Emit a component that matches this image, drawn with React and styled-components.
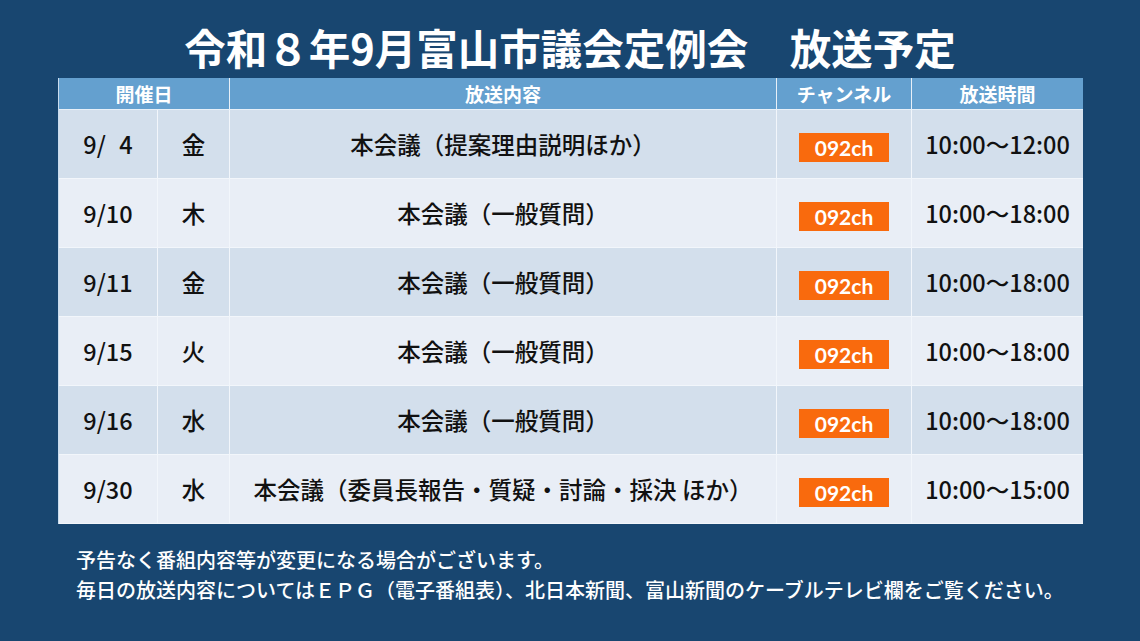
import styled, { createGlobalStyle } from "styled-components";

const GlobalStyle = createGlobalStyle`
    body {
        margin: 0;
        background: #184670;
        font-family: "Noto Sans CJK JP", "Noto Sans", sans-serif;
    }
`

const rows = [
    { date: "9/\u20074", day: "金", content: "本会議（提案理由説明ほか）", time: "10:00～12:00" },
    { date: "9/10", day: "木", content: "本会議（一般質問）", time: "10:00～18:00" },
    { date: "9/11", day: "金", content: "本会議（一般質問）", time: "10:00～18:00" },
    { date: "9/15", day: "火", content: "本会議（一般質問）", time: "10:00～18:00" },
    { date: "9/16", day: "水", content: "本会議（一般質問）", time: "10:00～18:00" },
    { date: "9/30", day: "水", content: "本会議（委員長報告・質疑・討論・採決 ほか）", time: "10:00～15:00" },
]

export default function App() {
    return (
        <Page>
            <GlobalStyle />
            <Title>令和８年9月富山市議会定例会　放送予定</Title>
            <Table>
                <HeadCell span={2}>開催日</HeadCell>
                <HeadCell>放送内容</HeadCell>
                <HeadCell>チャンネル</HeadCell>
                <HeadCell last>放送時間</HeadCell>
                {rows.map((r, i) => (
                    <Row key={r.date} odd={i % 2 === 0}>
                        <Cell>{r.date}</Cell>
                        <Cell>{r.day}</Cell>
                        <Cell>{r.content}</Cell>
                        <Cell><Badge>092ch</Badge></Cell>
                        <Cell last>{r.time}</Cell>
                    </Row>
                ))}
            </Table>
            <Notes>
                <p>予告なく番組内容等が変更になる場合がございます。</p>
                <p>毎日の放送内容についてはＥＰＧ（電子番組表）、北日本新聞、富山新聞のケーブルテレビ欄をご覧ください。</p>
            </Notes>
        </Page>
    )
}

const Page = styled.div`
    width: 1140px;
    height: 641px;
    display: flex;
    flex-direction: column;
    align-items: center;
    padding-top: 17px;
    box-sizing: border-box;
`

const Title = styled.h1`
    margin: 0;
    color: #ffffff;
    font-size: 41.5px;
    font-weight: 700;
    line-height: 61px;
`

const Table = styled.div`
    width: 1024px;
    display: grid;
    grid-template-columns: 99px 72px 547px 135px 171px;
    grid-template-rows: 32px repeat(6, 69px);
    border-left: 1px solid #c9dcee;
    border-right: 1px solid #c9dcee;
    box-sizing: border-box;
`

const HeadCell = styled.div`
    grid-column: span ${p => p.span || 1};
    background: #64a0cf;
    color: #ffffff;
    font-size: 19px;
    font-weight: 700;
    display: flex;
    align-items: center;
    justify-content: center;
    border-right: ${p => p.last ? "none" : "1px solid #e8f0f8"};
    border-bottom: 1px solid #e8f0f8;
`

const Row = styled.div`
    display: contents;
    & > div {
        background: ${p => p.odd ? "#d3dfec" : "#e9eef6"};
    }
`

const Cell = styled.div`
    display: flex;
    align-items: center;
    justify-content: center;
    color: #111111;
    font-size: 23.5px;
    font-weight: 500;
    white-space: pre;
    border-right: ${p => p.last ? "none" : "1px solid #f2f6fb"};
    border-bottom: 1px solid #f2f6fb;
`

const Badge = styled.span`
    width: 90px;
    height: 29px;
    margin-top: 6px;
    background: #f96a0d;
    color: #ffffff;
    font-family: Lato, "Noto Sans", sans-serif;
    font-size: 21px;
    font-weight: 700;
    display: flex;
    align-items: center;
    justify-content: center;
`

const Notes = styled.div`
    width: 1024px;
    padding-left: 18px;
    margin-top: 21px;
    box-sizing: border-box;
    color: #ffffff;
    font-size: 20px;
    font-weight: 500;
    p {
        margin: 0;
        line-height: 30px;
        white-space: nowrap;
    }
`
